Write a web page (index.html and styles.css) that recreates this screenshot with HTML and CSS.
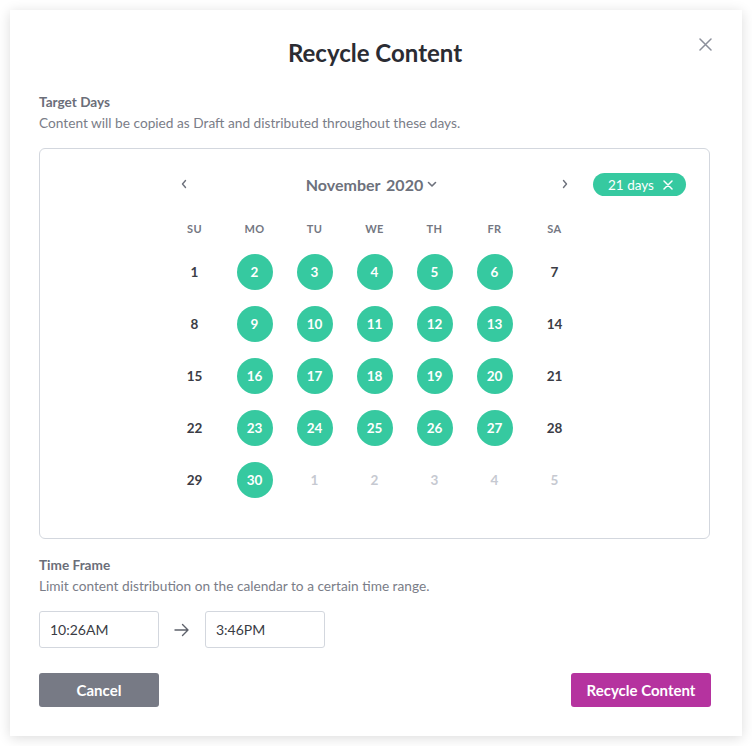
FILE: index.html
```html
<!DOCTYPE html>
<html>
<head>
<meta charset="utf-8">
<link rel="stylesheet" href="styles.css">
</head>
<body>
<div class="modal">
  <button class="close" aria-label="Close">
    <svg width="13" height="13" viewBox="0 0 13 13"><path d="M1 1L12 12M12 1L1 12" stroke="#8b8f9b" stroke-width="1.5" fill="none" stroke-linecap="round"/></svg>
  </button>
  <h1 class="title">Recycle Content</h1>

  <div class="label">Target Days</div>
  <div class="desc">Content will be copied as Draft and distributed throughout these days.</div>

  <div class="calbox">
    <div class="pill">21 days
      <svg width="10" height="10" viewBox="0 0 10 10"><path d="M1 1L9 9M9 1L1 9" stroke="#fff" stroke-width="1.5" fill="none" stroke-linecap="round"/></svg>
    </div>
    <div class="cal">
      <div class="calhead">
        <span class="nav"><svg width="8" height="10" viewBox="0 0 8 10"><path d="M5.5 1.5L2.5 5L5.5 8.5" stroke="#6d717c" stroke-width="1.4" fill="none" stroke-linecap="round" stroke-linejoin="round"/></svg></span>
        <span class="month">November&nbsp;2020 <svg width="10" height="8" viewBox="0 0 10 8"><path d="M1.5 2.5L5 6L8.5 2.5" stroke="#6d717c" stroke-width="1.6" fill="none" stroke-linecap="round" stroke-linejoin="round"/></svg></span>
        <span class="nav"><svg width="8" height="10" viewBox="0 0 8 10"><path d="M2.5 1.5L5.5 5L2.5 8.5" stroke="#6d717c" stroke-width="1.4" fill="none" stroke-linecap="round" stroke-linejoin="round"/></svg></span>
      </div>
      <div class="weekdays">
        <span>SU</span><span>MO</span><span>TU</span><span>WE</span><span>TH</span><span>FR</span><span>SA</span>
      </div>
      <div class="days">
        <span class="d">1</span><span class="d sel">2</span><span class="d sel">3</span><span class="d sel">4</span><span class="d sel">5</span><span class="d sel">6</span><span class="d">7</span>
        <span class="d">8</span><span class="d sel">9</span><span class="d sel">10</span><span class="d sel">11</span><span class="d sel">12</span><span class="d sel">13</span><span class="d">14</span>
        <span class="d">15</span><span class="d sel">16</span><span class="d sel">17</span><span class="d sel">18</span><span class="d sel">19</span><span class="d sel">20</span><span class="d">21</span>
        <span class="d">22</span><span class="d sel">23</span><span class="d sel">24</span><span class="d sel">25</span><span class="d sel">26</span><span class="d sel">27</span><span class="d">28</span>
        <span class="d">29</span><span class="d sel">30</span><span class="d out">1</span><span class="d out">2</span><span class="d out">3</span><span class="d out">4</span><span class="d out">5</span>
      </div>
    </div>
  </div>

  <div class="label label2">Time Frame</div>
  <div class="desc">Limit content distribution on the calendar to a certain time range.</div>

  <div class="times">
    <div class="input">10:26AM</div>
    <svg class="arrow" width="16" height="14" viewBox="0 0 16 14"><path d="M1 7H14M8.5 1.5L14 7L8.5 12.5" stroke="#5e616b" stroke-width="1.4" fill="none" stroke-linecap="round" stroke-linejoin="round"/></svg>
    <div class="input">3:46PM</div>
  </div>

  <div class="actions">
    <button class="btn cancel">Cancel</button>
    <button class="btn primary">Recycle Content</button>
  </div>
</div>
</body>
</html>
```

FILE: styles.css
```css
* { box-sizing: border-box; }
html, body { margin: 0; padding: 0; background: #ffffff; }
body { font-family: "Lato", "Liberation Sans", sans-serif; }

.modal {
  position: relative;
  margin: 10px;
  width: 732px;
  height: 726px;
  background: #fff;
  box-shadow: 0 2px 12px rgba(0, 0, 0, 0.14);
  padding: 29px 31px 0 29px;
}

.close {
  position: absolute;
  top: 28px;
  right: 30px;
  border: 0;
  background: none;
  padding: 0;
  width: 13px;
  height: 13px;
  line-height: 0;
}

.title {
  margin: 0;
  text-align: center;
  font-size: 24px;
  line-height: 28px;
  font-weight: 700;
  color: #2b2c33;
}

.label {
  margin-top: 26px;
  font-size: 13.6px;
  line-height: 18px;
  font-weight: 700;
  color: #6b6e79;
}
.label2 { margin-top: 17px; }

.desc {
  margin-top: 3px;
  font-size: 13.7px;
  line-height: 18px;
  color: #7a7d88;
}

.calbox {
  position: relative;
  margin-top: 16px;
  width: 671px;
  border: 1px solid #d3d7de;
  border-radius: 6px;
  padding: 23px 0 32px;
}

.pill {
  position: absolute;
  top: 24px;
  right: 23px;
  height: 23px;
  width: 93px;
  border-radius: 12px;
  background: #36c9a0;
  color: #fff;
  font-size: 13.5px;
  display: flex;
  align-items: center;
  justify-content: center;
  gap: 9px;
  padding-left: 2px;
}

.cal {
  width: 420px;
  margin: 0 auto;
}

.calhead {
  width: 400px;
  margin: 0 auto;
  height: 24px;
  display: flex;
  align-items: center;
  justify-content: space-between;
}
.nav {
  width: 18px;
  display: flex;
  justify-content: center;
  align-items: center;
}
.month {
  font-size: 16px;
  font-weight: 700;
  color: #6d717c;
  display: flex;
  align-items: center;
  gap: 4px;
  margin-left: -6px;
  word-spacing: 2px;
}

.weekdays {
  margin-top: 25px;
  display: grid;
  grid-template-columns: repeat(7, 60px);
  font-size: 11px;
  line-height: 16px;
  font-weight: 700;
  color: #747782;
  text-align: center;
  letter-spacing: 0.4px;
}

.days {
  margin-top: 9px;
  display: grid;
  grid-template-columns: repeat(7, 60px);
  grid-auto-rows: 52px;
}
.d {
  display: flex;
  align-items: center;
  justify-content: center;
  font-size: 13.5px;
  font-weight: 700;
  color: #3b3d46;
}
.d.sel {
  width: 36px;
  height: 36px;
  border-radius: 50%;
  background: #36c9a0;
  color: #fff;
  justify-self: center;
  align-self: center;
}
.d.out { color: #c6c9d1; }

.times {
  margin-top: 16px;
  display: flex;
  align-items: center;
}
.input {
  width: 120px;
  height: 37px;
  border: 1px solid #d3d7de;
  border-radius: 3px;
  font-size: 14px;
  color: #3a3c44;
  padding-left: 10px;
  display: flex;
  align-items: center;
}
.arrow { margin: 0 15px 0 15px; }

.actions {
  margin-top: 25px;
  display: flex;
  justify-content: space-between;
}
.btn {
  height: 34px;
  border: 0;
  border-radius: 3px;
  color: #fff;
  font-family: inherit;
  font-size: 15px;
  font-weight: 700;
}
.cancel { width: 120px; background: #777a85; }
.primary { width: 140px; background: #b5339f; }
```
